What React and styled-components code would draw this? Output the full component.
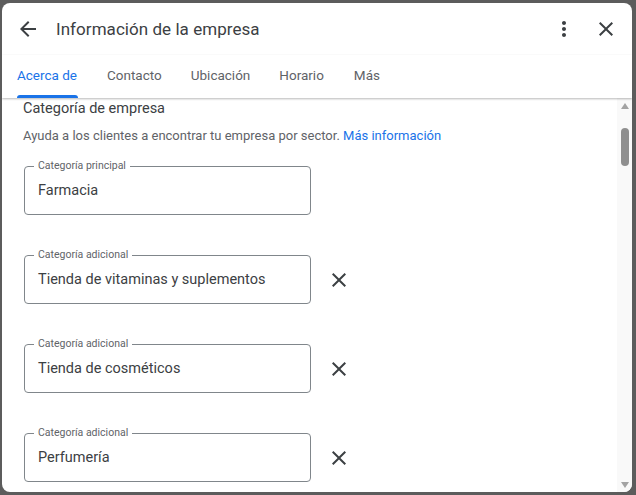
import React from "react";
import styled, { createGlobalStyle } from "styled-components";

const Global = createGlobalStyle`
  html, body { margin: 0; padding: 0; }
  body {
    background: #5c5c5c;
    font-family: Roboto, "Noto Sans", Arial, sans-serif;
    overflow: hidden;
  }
`;

const Backdrop = styled.div`
  width: 636px;
  height: 495px;
  padding: 3px 4px 3px 2px;
  box-sizing: border-box;
`;

const Dialog = styled.div`
  width: 630px;
  height: 489px;
  background: #fff;
  border-radius: 8px;
  overflow: hidden;
  display: flex;
  flex-direction: column;
`;

const Header = styled.div`
  height: 52px;
  flex: none;
  display: flex;
  align-items: center;
  padding: 0 14px 0 14px;
  box-sizing: border-box;
`;

const IconButton = styled.button`
  width: 24px;
  height: 24px;
  padding: 0;
  border: none;
  background: none;
  display: flex;
  align-items: center;
  justify-content: center;
  color: #3c4043;
  margin-left: ${(p) => p.$ml || 0}px;
  cursor: pointer;
  flex: none;
`;

const Title = styled.h1`
  margin: 0 0 0 16px;
  font-size: 17px;
  font-weight: 400;
  color: #3c4043;
  flex: 1;
  letter-spacing: 0.05px;
`;

const Tabs = styled.div`
  height: 43px;
  flex: none;
  display: flex;
  padding-left: 13px;
  box-shadow: 0 1px 2px rgba(0, 0, 0, 0.28);
  position: relative;
  z-index: 1;
`;

const Tab = styled.div`
  position: relative;
  height: 100%;
  display: flex;
  align-items: center;
  padding: 0 2px 3px;
  margin-right: ${(p) => p.$mr}px;
  box-sizing: border-box;
  font-size: 13.5px;
  color: ${(p) => (p.$active ? "#1a73e8" : "#5f6368")};
  &::after {
    content: "";
    display: ${(p) => (p.$active ? "block" : "none")};
    position: absolute;
    left: 2px;
    right: 1px;
    bottom: 0;
    height: 3px;
    background: #1a73e8;
    border-radius: 3px 3px 0 0;
  }
`;

const Body = styled.div`
  flex: 1;
  display: flex;
  min-height: 0;
`;

const Content = styled.div`
  flex: 1;
  overflow: hidden;
  padding: 2px 0 0 21px;
`;

const Heading = styled.h2`
  margin: 0;
  font-size: 14.5px;
  line-height: 18px;
  font-weight: 400;
  color: #3c4043;
`;

const Desc = styled.p`
  margin: 8px 0 0;
  font-size: 13px;
  line-height: 20px;
  color: #5f6368;
  a {
    color: #1a73e8;
    text-decoration: none;
  }
`;

const Fields = styled.div`
  margin-top: 20px;
  display: flex;
  flex-direction: column;
  gap: 40px;
`;

const Row = styled.div`
  display: flex;
  align-items: center;
  gap: 16px;
`;

const FieldBox = styled.div`
  position: relative;
  width: 287px;
  height: 49px;
  box-sizing: border-box;
  margin-left: 1px;
  border: 1px solid #80868b;
  border-radius: 4px;
  display: flex;
  align-items: center;
  padding: 0 13px;
  font-size: 14.5px;
  color: #3c4043;
`;

const FieldLabel = styled.span`
  position: absolute;
  left: 9px;
  top: -8px;
  padding: 0 4px;
  background: #fff;
  font-size: 10.5px;
  line-height: 14px;
  color: #5f6368;
`;

const Scrollbar = styled.div`
  width: 15px;
  flex: none;
  background: #f9f9f9;
  display: flex;
  flex-direction: column;
  align-items: center;
`;

const Arrow = styled.div`
  width: 0;
  height: 0;
  border-left: 4.5px solid transparent;
  border-right: 4.5px solid transparent;
  ${(p) =>
    p.$down
      ? "border-top: 6px solid #a3a3a3; margin-top: auto; margin-bottom: 4px;"
      : "border-bottom: 6px solid #a3a3a3; margin-top: 5px;"}
`;

const Thumb = styled.div`
  width: 8px;
  height: 38px;
  margin-top: 19px;
  border-radius: 4px;
  background: #8f8f8f;
`;

const ArrowBack = () => (
  <svg width="24" height="24" viewBox="0 0 24 24" fill="currentColor">
    <path d="M20 11H7.83l5.59-5.59L12 4l-8 8 8 8 1.41-1.41L7.83 13H20v-2z" />
  </svg>
);

const MoreVert = () => (
  <svg width="24" height="24" viewBox="0 0 24 24" fill="currentColor">
    <path d="M12 8c1.1 0 2-.9 2-2s-.9-2-2-2-2 .9-2 2 .9 2 2 2zm0 2c-1.1 0-2 .9-2 2s.9 2 2 2 2-.9 2-2-.9-2-2-2zm0 6c-1.1 0-2 .9-2 2s.9 2 2 2 2-.9 2-2-.9-2-2-2z" />
  </svg>
);

const Close = () => (
  <svg width="24" height="24" viewBox="0 0 24 24" fill="currentColor">
    <path d="M19 6.41 17.59 5 12 10.59 6.41 5 5 6.41 10.59 12 5 17.59 6.41 19 12 13.41 17.59 19 19 17.59 13.41 12z" />
  </svg>
);

const tabs = [
  { label: "Acerca de", mr: 26, active: true },
  { label: "Contacto", mr: 25 },
  { label: "Ubicación", mr: 25 },
  { label: "Horario", mr: 26 },
  { label: "Más", mr: 0 },
];

const fields = [
  { label: "Categoría principal", value: "Farmacia", removable: false },
  { label: "Categoría adicional", value: "Tienda de vitaminas y suplementos", removable: true },
  { label: "Categoría adicional", value: "Tienda de cosméticos", removable: true },
  { label: "Categoría adicional", value: "Perfumería", removable: true },
];

export default function App() {
  return (
    <>
      <Global />
      <Backdrop>
        <Dialog>
          <Header>
            <IconButton aria-label="Atrás">
              <ArrowBack />
            </IconButton>
            <Title>Información de la empresa</Title>
            <IconButton aria-label="Más opciones">
              <MoreVert />
            </IconButton>
            <IconButton aria-label="Cerrar" $ml={18}>
              <Close />
            </IconButton>
          </Header>
          <Tabs>
            {tabs.map((t) => (
              <Tab key={t.label} $active={t.active} $mr={t.mr}>
                {t.label}
              </Tab>
            ))}
          </Tabs>
          <Body>
            <Content>
              <Heading>Categoría de empresa</Heading>
              <Desc>
                Ayuda a los clientes a encontrar tu empresa por sector.{" "}
                <a href="#">Más información</a>
              </Desc>
              <Fields>
                {fields.map((f, i) => (
                  <Row key={i}>
                    <FieldBox>
                      <FieldLabel>{f.label}</FieldLabel>
                      {f.value}
                    </FieldBox>
                    {f.removable && (
                      <IconButton aria-label="Quitar">
                        <Close />
                      </IconButton>
                    )}
                  </Row>
                ))}
              </Fields>
            </Content>
            <Scrollbar>
              <Arrow />
              <Thumb />
              <Arrow $down />
            </Scrollbar>
          </Body>
        </Dialog>
      </Backdrop>
    </>
  );
}
